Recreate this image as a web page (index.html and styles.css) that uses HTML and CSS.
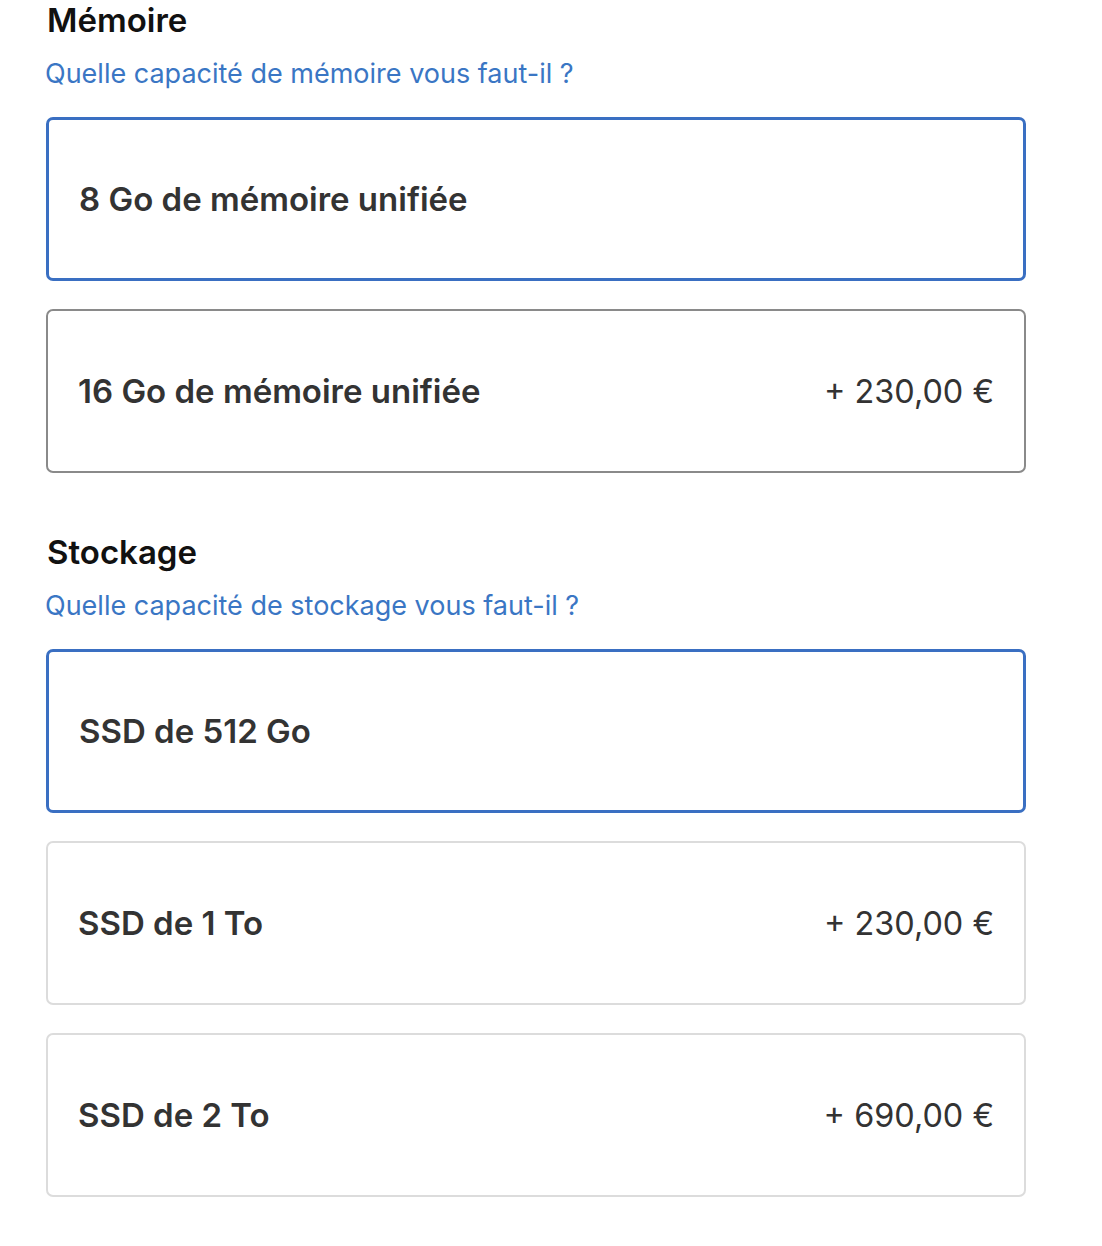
FILE: index.html
```html
<!DOCTYPE html>
<html lang="fr">
<head>
<meta charset="utf-8">
<link rel="stylesheet" href="styles.css">
</head>
<body>
<main class="page">
  <section class="group">
    <h2 class="group-title">Mémoire</h2>
    <a class="group-help">Quelle capacité de mémoire vous faut-il ?</a>
    <div class="options">
      <div class="option selected"><span class="label">8 Go de mémoire unifiée</span></div>
      <div class="option dark"><span class="label">16 Go de mémoire unifiée</span><span class="price">+ 230,00 €</span></div>
    </div>
  </section>
  <section class="group">
    <h2 class="group-title">Stockage</h2>
    <a class="group-help">Quelle capacité de stockage vous faut-il ?</a>
    <div class="options">
      <div class="option selected"><span class="label">SSD de 512 Go</span></div>
      <div class="option"><span class="label">SSD de 1 To</span><span class="price">+ 230,00 €</span></div>
      <div class="option"><span class="label">SSD de 2 To</span><span class="price">+ 690,00 €</span></div>
    </div>
  </section>
</main>
</body>
</html>
```

FILE: styles.css
```css
* { box-sizing: border-box; }
html, body { margin: 0; padding: 0; background: #fff; }
body { font-family: Inter, "Noto Sans", sans-serif; }
.page {
  width: 980px;
  margin-left: 46px;
  display: flex;
  flex-direction: column;
  gap: 59px;
}
.group { display: flex; flex-direction: column; }
.group-title {
  margin: 0 0 0 1px;
  font-size: 33px;
  font-weight: 600;
  color: #111;
  line-height: 40px;
}
.group-help {
  margin-top: 18px;
  margin-left: -1px;
  font-size: 27px;
  color: #3a76c4;
  line-height: 32px;
}
.options {
  margin-top: 27px;
  display: flex;
  flex-direction: column;
  gap: 28px;
}
.option {
  height: 164px;
  border: 2px solid #dcdcdc;
  border-radius: 7px;
  display: flex;
  align-items: center;
  justify-content: space-between;
  padding: 0 30px 0 30px;
  color: #333;
}
.option.dark { border-color: #8a8a8a; }
.option.selected { border: 3px solid #3a6fc2; padding-left: 30px; }
.label { font-size: 33px; font-weight: 600; }
.price { font-size: 32.4px; font-weight: 400; }
```
